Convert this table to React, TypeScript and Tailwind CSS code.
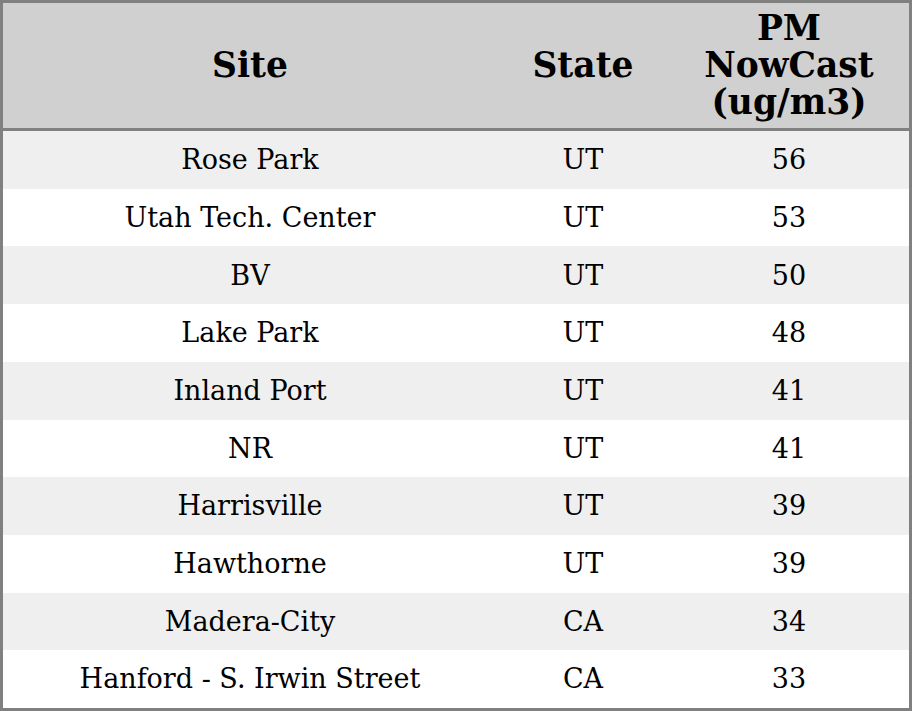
const rows: [string, string, number][] = [
  ['Rose Park', 'UT', 56],
  ['Utah Tech. Center', 'UT', 53],
  ['BV', 'UT', 50],
  ['Lake Park', 'UT', 48],
  ['Inland Port', 'UT', 41],
  ['NR', 'UT', 41],
  ['Harrisville', 'UT', 39],
  ['Hawthorne', 'UT', 39],
  ['Madera-City', 'CA', 34],
  ['Hanford - S. Irwin Street', 'CA', 33],
];

export default function App() {
  return (
    <div
      className="w-[912px] h-[711px] border-[3px] border-[#808080] flex flex-col bg-white text-black"
      style={{ fontFamily: '"DejaVu Serif", serif' }}
    >
      {/* Header */}
      <div className="h-[125px] shrink-0 bg-[#d0d0d0] border-b-[3px] border-[#808080] box-content flex items-center text-[34.5px] leading-[37px] font-bold text-center">
        <div className="w-[494px]">Site</div>
        <div className="w-[172px]">State</div>
        <div className="w-[240px]">
          PM
          <br />
          NowCast
          <br />
          (ug/m3)
        </div>
      </div>

      {/* Rows */}
      <div className="flex-1 flex flex-col text-[27px]">
        {rows.map(([site, state, value], i) => (
          <div
            key={site}
            className={`flex-1 flex items-center text-center pt-[1px] ${i % 2 === 0 ? 'bg-[#efefef]' : 'bg-white'}`}
          >
            <div className="w-[494px]">{site}</div>
            <div className="w-[172px]">{state}</div>
            <div className="w-[240px]">{value}</div>
          </div>
        ))}
      </div>
    </div>
  );
}
